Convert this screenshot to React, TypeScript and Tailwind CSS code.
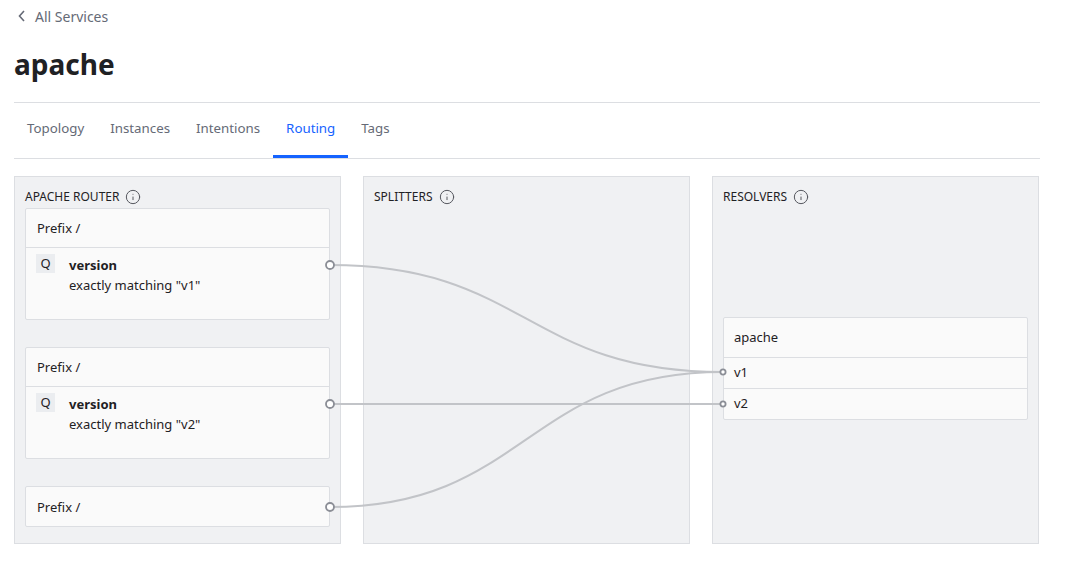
import { Info } from "lucide-react";

const tabs = ["Topology", "Instances", "Intentions", "Routing", "Tags"];

function PanelHeader({ title }: { title: string }) {
  return (
    <div className="flex items-center gap-[6px] pt-[12px] pb-[3px] text-[12px] leading-[16px] text-[#1f2124] uppercase">
      <span>{title}</span>
      <Info size={16} strokeWidth={1.5} className="text-[#56585f]" />
    </div>
  );
}

function RouteCard({ value }: { value?: string }) {
  return (
    <div className="bg-[#fafafa] border border-[#dcdee2] rounded-[2px]">
      <div className={`px-[11px] pt-[2px] h-[39px] flex items-center text-[13px] ${value ? "border-b border-[#dcdee2]" : ""}`}>
        Prefix /
      </div>
      {value && (
        <div className="flex h-[71px] pt-[6px] pl-[10px]">
          <div className="w-[19px] h-[19px] bg-[#ebedf0] flex items-center justify-center text-[13px]">Q</div>
          <div className="ml-[14px] pt-[1px] text-[13px] leading-[20px]">
            <div className="font-bold">version</div>
            <div>exactly matching "{value}"</div>
          </div>
        </div>
      )}
    </div>
  );
}

export default function App() {
  return (
    <div className="w-[1066px] h-[580px] bg-white px-[14px] text-[#1f2124]" style={{ fontFamily: '"Noto Sans", sans-serif' }}>
      <div className="flex items-center h-[33px] pl-[4px] pb-[1px] gap-[9px] text-[14px] text-[#656a76]">
        <svg width="8" height="12" viewBox="0 0 8 12" fill="none" stroke="#656a76" strokeWidth="1.6">
          <polyline points="6,1 1.5,6 6,11" />
        </svg>
        <span>All Services</span>
      </div>
      <div className="h-[70px] flex items-center border-b border-[#dcdee2] w-[1026px]">
        <h1 className="text-[28px] font-bold leading-none -mt-[7px]">apache</h1>
      </div>
      <nav className="flex h-[56px] border-b border-[#dcdee2] w-[1026px]">
        {tabs.map((t) => (
          <div
            key={t}
            className={`px-[13px] flex items-center text-[13.3px] border-b-[3px] ${
              t === "Routing" ? "text-[#1563ff] border-[#1563ff]" : "text-[#656a76] border-transparent"
            }`}
          >
            {t}
          </div>
        ))}
      </nav>
      <div className="relative mt-[17px] grid grid-cols-[327px_327px_327px] gap-[22px] w-[1026px]">
        <div className="h-[368px] bg-[#f0f1f3] border border-[#dcdee2] px-[10px]">
          <PanelHeader title="Apache Router" />
          <RouteCard value="v1" />
          <div className="h-[27px]" />
          <RouteCard value="v2" />
          <div className="h-[27px]" />
          <RouteCard />
        </div>
        <div className="h-[368px] bg-[#f0f1f3] border border-[#dcdee2] px-[10px]">
          <PanelHeader title="Splitters" />
        </div>
        <div className="h-[368px] bg-[#f0f1f3] border border-[#dcdee2] px-[10px]">
          <PanelHeader title="Resolvers" />
          <div className="mt-[109px] bg-[#fafafa] border border-[#dcdee2] rounded-[2px] text-[13px]">
            <div className="h-[40px] px-[10px] flex items-center border-b border-[#dcdee2]">apache</div>
            <div className="h-[31px] px-[10px] flex items-center border-b border-[#dcdee2]">v1</div>
            <div className="h-[30px] px-[10px] flex items-center">v2</div>
          </div>
        </div>
        <svg className="absolute inset-0 pointer-events-none" width="1026" height="368">
          <g fill="none" stroke="#c2c4c8" strokeWidth="2">
            <path d="M316 89 C 512 89, 512 196, 709 196" />
            <path d="M316 228 L 709 228" />
            <path d="M316 331 C 512 331, 512 196, 709 196" />
          </g>
          <g fill="#fff" stroke="#8b8e96" strokeWidth="1.8">
            <circle cx="316" cy="89" r="4" />
            <circle cx="316" cy="228" r="4" />
            <circle cx="316" cy="331" r="4" />
            <circle cx="709" cy="196" r="2.6" />
            <circle cx="709" cy="228" r="2.6" />
          </g>
        </svg>
      </div>
    </div>
  );
}
